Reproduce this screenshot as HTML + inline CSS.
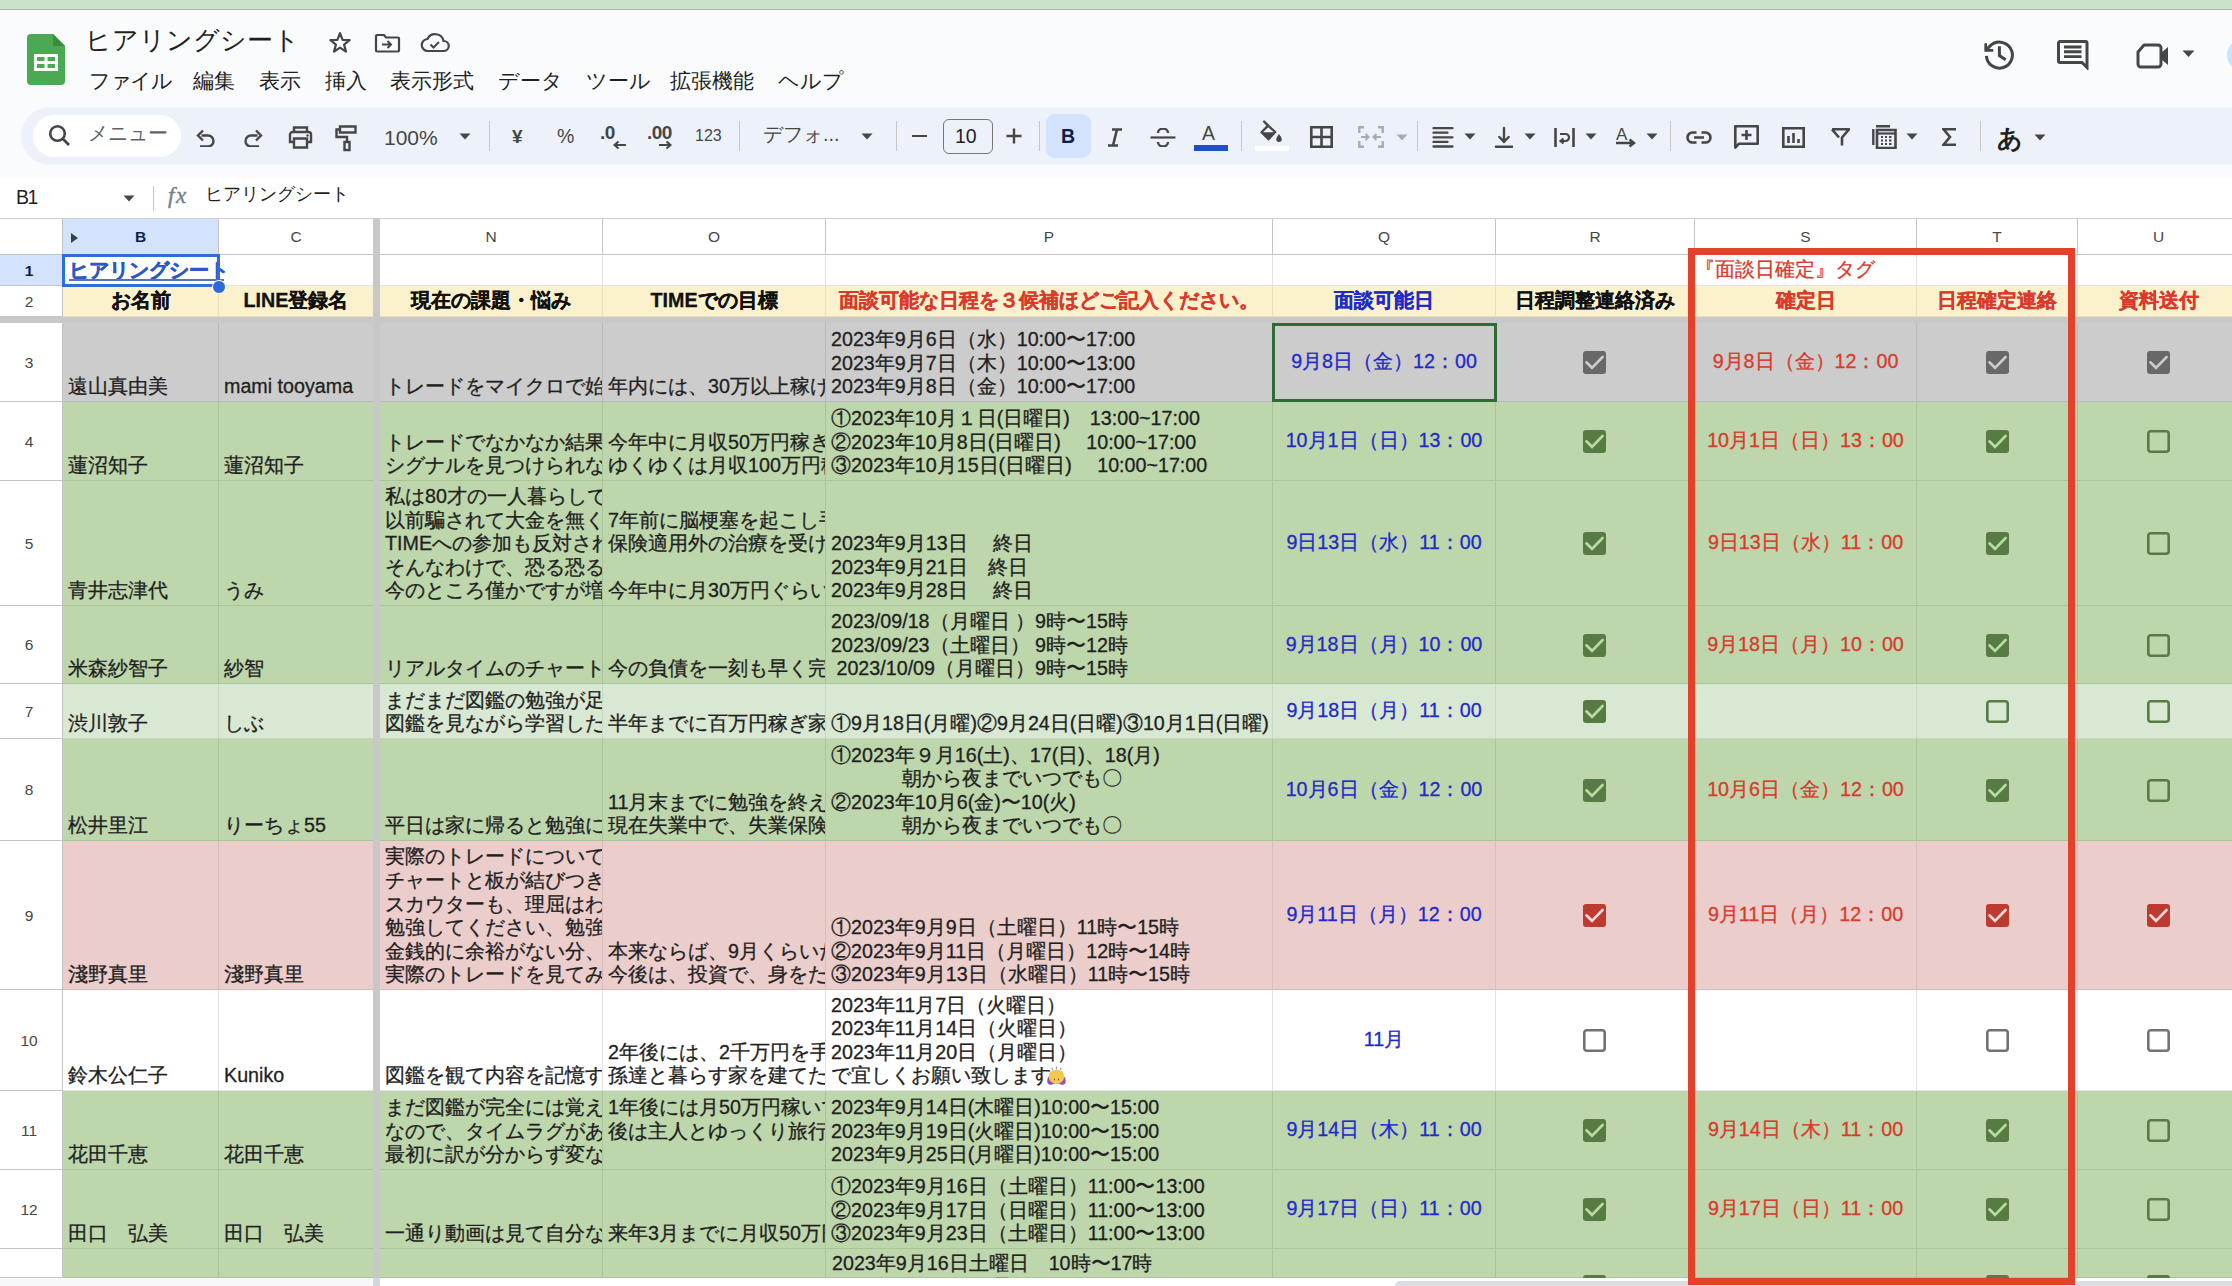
<!DOCTYPE html><html><head><meta charset="utf-8"><title>ヒアリングシート</title><style>
*{margin:0;padding:0;box-sizing:border-box}
html,body{width:2232px;height:1286px;overflow:hidden;background:#f9fbfd;
 font-family:"Liberation Sans",sans-serif;color:#1f1f1f}
div,span,svg{position:absolute}
.c{display:flex;flex-direction:column;white-space:pre;font-size:19.7px;line-height:23.6px;overflow:hidden}
.c div{position:static}
.c{-webkit-text-stroke:0.3px currentColor}
</style></head><body>
<div style="left:0px;top:0px;width:2232px;height:9px;background:#cae0c8"></div>
<div style="left:0px;top:9px;width:2232px;height:1px;background:#aabaa6"></div>
<svg style="left:27px;top:34px" width="38" height="51" viewBox="0 0 38 51"><path d="M4 0 H26 L38 12 V47 a4 4 0 0 1 -4 4 H4 a4 4 0 0 1 -4 -4 V4 a4 4 0 0 1 4 -4 Z" fill="#4ba954"/><path d="M26 0 L38 12 H26 Z" fill="#398c3e"/><path d="M7 20 H31 V37 H7 Z M10 23 V27 H17.5 V23 Z M20.5 23 V27 H28 V23 Z M10 30 V34 H17.5 V30 Z M20.5 30 V34 H28 V30 Z" fill="#fff" fill-rule="evenodd"/></svg>
<div style="left:85px;top:27px;font-size:26px;line-height:1;color:#1f1f1f;white-space:pre;">ヒアリングシート</div>
<svg style="left:328px;top:31px" width="24" height="23" viewBox="0 0 24 23"><path d="M12 2.2 L14.6 8.9 L21.6 9.2 L16.1 13.6 L18 20.6 L12 16.6 L6 20.6 L7.9 13.6 L2.4 9.2 L9.4 8.9 Z" fill="none" stroke="#444746" stroke-width="2.2" stroke-linejoin="round"/></svg>
<svg style="left:374px;top:33px" width="27" height="20" viewBox="0 0 27 20"><path d="M2 3 V17.5 a1 1 0 0 0 1 1 H24 a1 1 0 0 0 1 -1 V5.5 a1 1 0 0 0 -1 -1 H12 L10 2 H3 a1 1 0 0 0 -1 1 Z" fill="none" stroke="#444746" stroke-width="2.2"/><path d="M8 11.5 H17 M13.5 8 L17 11.5 L13.5 15" fill="none" stroke="#444746" stroke-width="2"/></svg>
<svg style="left:420px;top:32px" width="30" height="22" viewBox="0 0 30 22"><path d="M8 19 a6 6 0 0 1 -0.5 -12 a8.5 8.5 0 0 1 16 2 a5 5 0 0 1 0.5 10 Z" fill="none" stroke="#444746" stroke-width="2.2" stroke-linejoin="round"/><path d="M10.5 12.5 L13.5 15.5 L19 10" fill="none" stroke="#444746" stroke-width="2"/></svg>
<div style="left:89px;top:70px;font-size:21px;line-height:1;color:#1f1f1f;white-space:pre;letter-spacing:-1.5px">ファイル</div>
<div style="left:193px;top:70px;font-size:21px;line-height:1;color:#1f1f1f;white-space:pre;">編集</div>
<div style="left:259px;top:70px;font-size:21px;line-height:1;color:#1f1f1f;white-space:pre;">表示</div>
<div style="left:325px;top:70px;font-size:21px;line-height:1;color:#1f1f1f;white-space:pre;">挿入</div>
<div style="left:390px;top:70px;font-size:21px;line-height:1;color:#1f1f1f;white-space:pre;">表示形式</div>
<div style="left:498px;top:70px;font-size:21px;line-height:1;color:#1f1f1f;white-space:pre;">データ</div>
<div style="left:586px;top:70px;font-size:21px;line-height:1;color:#1f1f1f;white-space:pre;">ツール</div>
<div style="left:670px;top:70px;font-size:21px;line-height:1;color:#1f1f1f;white-space:pre;">拡張機能</div>
<div style="left:778px;top:70px;font-size:21px;line-height:1;color:#1f1f1f;white-space:pre;">ヘルプ</div>
<svg style="left:1982px;top:38px" width="34" height="34" viewBox="0 0 34 34"><path d="M3.7 12.4 L8 8.1 A13 13 0 1 1 4.4 17.8" fill="none" stroke="#444746" stroke-width="3"/><path d="M3.7 5.2 V12.4 H11.2" fill="none" stroke="#444746" stroke-width="2.7"/><path d="M17.4 8.2 V17.6 L23.7 21.7" fill="none" stroke="#444746" stroke-width="3"/></svg>
<svg style="left:2057px;top:39px" width="32" height="31" viewBox="0 0 32 31"><path d="M3 2.5 H28.5 a1.5 1.5 0 0 1 1.5 1.5 V28.5 L25 23.5 H3 a1.5 1.5 0 0 1 -1.5 -1.5 V4 a1.5 1.5 0 0 1 1.5 -1.5 Z" fill="none" stroke="#444746" stroke-width="3"/><path d="M7 8 H24.5 M7 12.8 H24.5 M7 17.6 H24.5" stroke="#444746" stroke-width="2.9"/></svg>
<svg style="left:2136px;top:42px" width="36" height="28" viewBox="0 0 36 28"><path d="M8 3 H22 a3 3 0 0 1 3 3 V22 a3 3 0 0 1 -3 3 H5 a3 3 0 0 1 -3 -3 V10 Z" fill="none" stroke="#444746" stroke-width="3" stroke-linejoin="round"/><path d="M25 11 L32 5 V23 L25 17 Z" fill="#444746"/></svg>
<svg style="left:2182px;top:50px" width="13" height="8" viewBox="0 0 13 8"><path d="M0.5 0.5 H12.5 L6.5 7 Z" fill="#444746"/></svg>
<div style="left:2227px;top:38px;width:36px;height:34px;border-radius:50%;background:#c2e7ff"></div>
<div style="left:21px;top:107px;width:2300px;height:58px;border-radius:29px;background:#edf2fa"></div>
<div style="left:33px;top:115px;width:148px;height:42px;border-radius:21px;background:#ffffff"></div>
<svg style="left:47px;top:123px" width="24" height="24" viewBox="0 0 24 24"><circle cx="10.5" cy="10.5" r="7.3" fill="none" stroke="#444746" stroke-width="2.6"/><path d="M15.8 15.8 L22 22" stroke="#444746" stroke-width="2.8"/></svg>
<div style="left:88px;top:123px;font-size:20px;line-height:1;color:#5f6368;white-space:pre;">メニュー</div>
<svg style="left:196px;top:128px" width="20" height="19" viewBox="0 0 20 19"><path d="M5.5 7.5 H12 a5.5 5.5 0 0 1 0 11 H4" fill="none" stroke="#444746" stroke-width="2.4"/><path d="M7 2.5 L2 7.5 L7 12.5" fill="none" stroke="#444746" stroke-width="2.4"/></svg>
<svg style="left:243px;top:128px" width="20" height="19" viewBox="0 0 20 19"><path d="M14.5 7.5 H8 a5.5 5.5 0 0 0 0 11 H16" fill="none" stroke="#444746" stroke-width="2.4"/><path d="M13 2.5 L18 7.5 L13 12.5" fill="none" stroke="#444746" stroke-width="2.4"/></svg>
<svg style="left:288px;top:126px" width="25" height="23" viewBox="0 0 25 23"><path d="M6 6 V1.5 H19 V6" fill="none" stroke="#444746" stroke-width="2.4"/><path d="M6 16 H2 V8.5 a2.5 2.5 0 0 1 2.5 -2.5 H20.5 a2.5 2.5 0 0 1 2.5 2.5 V16 H19" fill="none" stroke="#444746" stroke-width="2.4"/><path d="M6 12.5 H19 V21.5 H6 Z" fill="none" stroke="#444746" stroke-width="2.4"/><circle cx="19.5" cy="9.5" r="1.2" fill="#444746"/></svg>
<svg style="left:334px;top:125px" width="24" height="27" viewBox="0 0 24 27"><path d="M6 1.5 H21.5 V7.5 H6 Z" fill="none" stroke="#444746" stroke-width="2.4"/><path d="M6 4.5 H2.5 V12 H13 V17" fill="none" stroke="#444746" stroke-width="2.4"/><path d="M10.5 17 H15.5 V25 H10.5 Z" fill="none" stroke="#444746" stroke-width="2.4"/></svg>
<div style="left:384px;top:127px;font-size:21px;line-height:1;color:#444746;white-space:pre;">100%</div>
<svg style="left:459px;top:133px" width="12" height="7" viewBox="0 0 12 7"><path d="M0.5 0.5 H11.5 L6 6.5 Z" fill="#444746"/></svg>
<div style="left:489px;top:121px;width:1.3px;height:30px;background:#c7c7c7"></div>
<div style="left:512px;top:127px;font-size:19px;line-height:1;color:#444746;white-space:pre;font-weight:bold">¥</div>
<div style="left:557px;top:127px;font-size:19.5px;line-height:1;color:#444746;white-space:pre;">%</div>
<div style="left:600px;top:123px;font-size:19px;line-height:1;color:#444746;white-space:pre;font-weight:bold;letter-spacing:-0.5px">.0</div>
<svg style="left:612px;top:140px" width="15" height="10" viewBox="0 0 15 10"><path d="M14 5 H3 M6.5 1.5 L2.5 5 L6.5 8.5" fill="none" stroke="#444746" stroke-width="2"/></svg>
<div style="left:647px;top:123px;font-size:19px;line-height:1;color:#444746;white-space:pre;font-weight:bold;letter-spacing:-0.5px">.00</div>
<svg style="left:658px;top:140px" width="15" height="10" viewBox="0 0 15 10"><path d="M1 5 H12 M8.5 1.5 L12.5 5 L8.5 8.5" fill="none" stroke="#444746" stroke-width="2"/></svg>
<div style="left:695px;top:128px;font-size:16px;line-height:1;color:#444746;white-space:pre;">123</div>
<div style="left:739px;top:121px;width:1.3px;height:30px;background:#c7c7c7"></div>
<div style="left:763px;top:124px;font-size:20px;line-height:1;color:#444746;white-space:pre;">デフォ...</div>
<svg style="left:861px;top:133px" width="12" height="7" viewBox="0 0 12 7"><path d="M0.5 0.5 H11.5 L6 6.5 Z" fill="#444746"/></svg>
<div style="left:896px;top:121px;width:1.3px;height:30px;background:#c7c7c7"></div>
<div style="left:912px;top:135px;width:15px;height:2.4px;background:#444746"></div>
<div style="left:943px;top:118.5px;width:50px;height:35px;border:1.6px solid #747775;border-radius:6px"></div>
<div style="left:955px;top:127px;font-size:19.5px;line-height:1;color:#1f1f1f;white-space:pre;">10</div>
<svg style="left:1006px;top:128px" width="16" height="16" viewBox="0 0 16 16"><path d="M8 0.5 V15.5 M0.5 8 H15.5" stroke="#444746" stroke-width="2.4"/></svg>
<div style="left:1039px;top:121px;width:1.3px;height:30px;background:#c7c7c7"></div>
<div style="left:1046px;top:114px;width:45px;height:44px;border-radius:9px;background:#d3e3fd"></div>
<div style="left:1061px;top:127px;font-size:19.5px;line-height:1;color:#0b1f48;white-space:pre;font-weight:bold">B</div>
<svg style="left:1106px;top:128px" width="18" height="19" viewBox="0 0 18 19"><path d="M6 1.5 H16 M2 17.5 H12 M11 1.5 L7 17.5" fill="none" stroke="#444746" stroke-width="2.6"/></svg>
<svg style="left:1150px;top:128px" width="26" height="19" viewBox="0 0 26 19"><path d="M0.5 9.5 H25.5" stroke="#444746" stroke-width="2.2"/><path d="M18 5 a5 4.5 0 0 0 -10 0" fill="none" stroke="#444746" stroke-width="2.4"/><path d="M8 14 a5 4.5 0 0 0 10 0" fill="none" stroke="#444746" stroke-width="2.4"/></svg>
<div style="left:1202px;top:124px;font-size:19.5px;line-height:1;color:#444746;white-space:pre;">A</div>
<div style="left:1194px;top:145px;width:34px;height:6px;background:#1f4ec9"></div>
<div style="left:1241px;top:121px;width:1.3px;height:30px;background:#c7c7c7"></div>
<svg style="left:1258px;top:119px" width="26" height="24" viewBox="0 0 26 24"><path d="M6.1 2.5 L10 6.6" stroke="#444746" stroke-width="2.4" stroke-linecap="round"/><path d="M3.5 13.2 L10.1 6.6 L17.2 13 L10.5 20.2 Z" fill="none" stroke="#444746" stroke-width="2.3" stroke-linejoin="round"/><path d="M3.5 13.2 H17.2 L10.5 20.2 Z" fill="#444746"/><path d="M21 15 C19.3 17.5 18.3 19 18.3 20.2 a2.7 2.7 0 0 0 5.4 0 C23.7 19 22.7 17.5 21 15 Z" fill="#444746"/></svg>
<div style="left:1255px;top:146px;width:34px;height:5px;background:#ffffff;border-radius:2px"></div>
<svg style="left:1310px;top:126px" width="23" height="22" viewBox="0 0 23 22"><path d="M1.3 1.3 H21.7 V20.7 H1.3 Z M11.5 1.3 V20.7 M1.3 11 H21.7" fill="none" stroke="#444746" stroke-width="2.6"/></svg>
<svg style="left:1358px;top:126px" width="26" height="22" viewBox="0 0 26 22"><path d="M1.3 7 V1.3 H6 M20 1.3 H24.7 V7 M24.7 15 V20.7 H20 M6 20.7 H1.3 V15" fill="none" stroke="#a8abaf" stroke-width="2.4"/><path d="M3 11 H10 M7.5 8 L10.5 11 L7.5 14 M23 11 H16 M18.5 8 L15.5 11 L18.5 14" fill="none" stroke="#a8abaf" stroke-width="2"/></svg>
<svg style="left:1396px;top:134px" width="12" height="7" viewBox="0 0 12 7"><path d="M0.5 0.5 H11.5 L6 6.5 Z" fill="#a8abaf"/></svg>
<div style="left:1417px;top:121px;width:1.3px;height:30px;background:#c7c7c7"></div>
<svg style="left:1431px;top:126px" width="24" height="22" viewBox="0 0 24 22"><path d="M2.5 2.2 H21.5 M2.5 6.7 H16.5 M2.5 11.3 H21.5 M2.5 15.9 H16.5 M2.5 20.5 H21.5" stroke="#444746" stroke-width="2.3" stroke-linecap="round"/></svg>
<svg style="left:1464px;top:133px" width="12" height="7" viewBox="0 0 12 7"><path d="M0.5 0.5 H11.5 L6 6.5 Z" fill="#444746"/></svg>
<svg style="left:1494px;top:126px" width="20" height="23" viewBox="0 0 20 23"><path d="M10 2 V16 M5.3 11 L10 15.8 L14.7 11" fill="none" stroke="#444746" stroke-width="2.4" stroke-linecap="round"/><path d="M2 20.7 H18" stroke="#444746" stroke-width="2.4" stroke-linecap="round"/></svg>
<svg style="left:1524px;top:133px" width="12" height="7" viewBox="0 0 12 7"><path d="M0.5 0.5 H11.5 L6 6.5 Z" fill="#444746"/></svg>
<svg style="left:1554px;top:128px" width="21" height="19" viewBox="0 0 21 19"><path d="M1.5 0 V19 M19.5 0 V19" stroke="#444746" stroke-width="2.6"/><path d="M6 6 H11.5 a3.5 3.5 0 0 1 0 7 H7 M9.5 10.5 L6.5 13 L9.5 15.5" fill="none" stroke="#444746" stroke-width="2.2"/></svg>
<svg style="left:1585px;top:133px" width="12" height="7" viewBox="0 0 12 7"><path d="M0.5 0.5 H11.5 L6 6.5 Z" fill="#444746"/></svg>
<div style="left:1616px;top:126px;font-size:17px;line-height:1;color:#444746;white-space:pre;">A</div>
<svg style="left:1615px;top:138px" width="22" height="10" viewBox="0 0 22 10"><path d="M1 5 H18 M14.5 1.5 L19 5 L14.5 8.5" fill="none" stroke="#444746" stroke-width="2.4"/></svg>
<svg style="left:1646px;top:133px" width="12" height="7" viewBox="0 0 12 7"><path d="M0.5 0.5 H11.5 L6 6.5 Z" fill="#444746"/></svg>
<div style="left:1670px;top:121px;width:1.3px;height:30px;background:#c7c7c7"></div>
<svg style="left:1686px;top:131px" width="26" height="13" viewBox="0 0 26 13"><path d="M10.5 1.5 H6.5 a5 5 0 0 0 0 10 H10.5 M15.5 1.5 H19.5 a5 5 0 0 1 0 10 H15.5 M8 6.5 H18" fill="none" stroke="#444746" stroke-width="2.6"/></svg>
<svg style="left:1734px;top:125px" width="25" height="24" viewBox="0 0 25 24"><path d="M1.3 1.3 H23.7 V18.7 H5 L1.3 22.5 Z" fill="none" stroke="#444746" stroke-width="2.6" stroke-linejoin="round"/><path d="M12.5 5 V15 M7.5 10 H17.5" stroke="#444746" stroke-width="2.6"/></svg>
<svg style="left:1782px;top:127px" width="23" height="21" viewBox="0 0 23 21"><path d="M1.3 1.3 H21.7 V19.7 H1.3 Z" fill="none" stroke="#444746" stroke-width="2.6"/><path d="M6.5 9 V16 M11.5 6 V16 M16.5 12 V16" stroke="#444746" stroke-width="2.6"/></svg>
<svg style="left:1831px;top:128px" width="19" height="18" viewBox="0 0 19 18"><path d="M1 1.3 H18 L11 9.5 V17.5 M8 9.5 L1 1.3" fill="none" stroke="#444746" stroke-width="2.6" stroke-linejoin="round"/></svg>
<svg style="left:1872px;top:125px" width="25" height="24" viewBox="0 0 25 24"><path d="M4 1.3 H18 M1.3 4 V20" fill="none" stroke="#444746" stroke-width="2.4"/><path d="M5 5 H23.5 V23 H5 Z" fill="none" stroke="#444746" stroke-width="2.6"/><path d="M9 12 H11 M13 12 H15 M17 12 H19.5 M9 15.5 H11 M13 15.5 H15 M17 15.5 H19.5 M9 19 H11 M13 19 H15 M17 19 H19.5" stroke="#444746" stroke-width="2.2"/><path d="M5 8.5 H23.5" stroke="#444746" stroke-width="2.2"/></svg>
<svg style="left:1906px;top:133px" width="12" height="7" viewBox="0 0 12 7"><path d="M0.5 0.5 H11.5 L6 6.5 Z" fill="#444746"/></svg>
<svg style="left:1942px;top:128px" width="15" height="18" viewBox="0 0 15 18"><path d="M14 1.3 H1.5 L8 9 L1.5 16.7 H14" fill="none" stroke="#444746" stroke-width="2.6" stroke-linejoin="miter"/></svg>
<div style="left:1980px;top:121px;width:1.3px;height:30px;background:#c7c7c7"></div>
<div style="left:1997px;top:126px;font-size:25px;line-height:1;color:#1f1f1f;white-space:pre;font-weight:bold">あ</div>
<svg style="left:2034px;top:134px" width="12" height="7" viewBox="0 0 12 7"><path d="M0.5 0.5 H11.5 L6 6.5 Z" fill="#444746"/></svg>
<div style="left:0px;top:177px;width:2232px;height:1109px;background:#ffffff"></div>
<div style="left:0px;top:218px;width:2232px;height:2px;background:#cfcfcf"></div>
<div style="left:16px;top:188px;font-size:19.5px;line-height:1;color:#1f1f1f;white-space:pre;letter-spacing:-1.5px">B1</div>
<svg style="left:123px;top:195px" width="12" height="7" viewBox="0 0 12 7"><path d="M0.5 0.5 H11.5 L6 6.5 Z" fill="#444746"/></svg>
<div style="left:153px;top:186px;width:1.2px;height:25px;background:#c7c7c7"></div>
<div style="left:168px;top:184px;font-size:23px;line-height:1;color:#7a7f85;white-space:pre;font-family:Liberation Serif,serif;font-style:italic;letter-spacing:1.5px;-webkit-text-stroke:0.4px #7a7f85">fx</div>
<div style="left:205px;top:186px;font-size:17.5px;line-height:1;color:#1f1f1f;white-space:pre;">ヒアリングシート</div>
<div style="left:63px;top:255px;width:2169px;height:31px;background:#ffffff"></div>
<div style="left:63px;top:286px;width:2169px;height:31px;background:#fbf1cd"></div>
<div style="left:63px;top:323px;width:2169px;height:79px;background:#cccccc"></div>
<div style="left:63px;top:402px;width:2169px;height:79px;background:#bdd6ab"></div>
<div style="left:63px;top:481px;width:2169px;height:125px;background:#bdd6ab"></div>
<div style="left:63px;top:606px;width:2169px;height:78px;background:#bdd6ab"></div>
<div style="left:63px;top:684px;width:2169px;height:55px;background:#d9e8d2"></div>
<div style="left:63px;top:739px;width:2169px;height:102px;background:#bdd6ab"></div>
<div style="left:63px;top:841px;width:2169px;height:149px;background:#ebcdcc"></div>
<div style="left:63px;top:990px;width:2169px;height:101px;background:#ffffff"></div>
<div style="left:63px;top:1091px;width:2169px;height:79px;background:#bdd6ab"></div>
<div style="left:63px;top:1170px;width:2169px;height:79px;background:#bdd6ab"></div>
<div style="left:63px;top:1249px;width:2169px;height:29px;background:#bdd6ab"></div>
<div style="left:0px;top:219px;width:2232px;height:36px;background:#ffffff"></div>
<div style="left:63px;top:219px;width:155px;height:36px;background:#d3e3fd"></div>
<div style="left:0px;top:255px;width:62px;height:31px;background:#d3e3fd"></div>
<div style="left:0px;top:286px;width:62px;height:31px;background:#ffffff"></div>
<div style="left:0px;top:323px;width:62px;height:79px;background:#ffffff"></div>
<div style="left:0px;top:402px;width:62px;height:79px;background:#ffffff"></div>
<div style="left:0px;top:481px;width:62px;height:125px;background:#ffffff"></div>
<div style="left:0px;top:606px;width:62px;height:78px;background:#ffffff"></div>
<div style="left:0px;top:684px;width:62px;height:55px;background:#ffffff"></div>
<div style="left:0px;top:739px;width:62px;height:102px;background:#ffffff"></div>
<div style="left:0px;top:841px;width:62px;height:149px;background:#ffffff"></div>
<div style="left:0px;top:990px;width:62px;height:101px;background:#ffffff"></div>
<div style="left:0px;top:1091px;width:62px;height:79px;background:#ffffff"></div>
<div style="left:0px;top:1170px;width:62px;height:79px;background:#ffffff"></div>
<div style="left:0px;top:1249px;width:62px;height:29px;background:#ffffff"></div>
<div style="left:0px;top:254px;width:2232px;height:1px;background:#c4c4c4"></div>
<div style="left:0px;top:285px;width:62px;height:1px;background:#c4c4c4"></div>
<div style="left:63px;top:285px;width:2169px;height:1px;background:#e2e2e2"></div>
<div style="left:0px;top:316px;width:62px;height:1px;background:#c4c4c4"></div>
<div style="left:63px;top:316px;width:2169px;height:1px;background:#e9dfbd"></div>
<div style="left:0px;top:401px;width:62px;height:1px;background:#c4c4c4"></div>
<div style="left:63px;top:401px;width:2169px;height:1px;background:#bbbbbb"></div>
<div style="left:0px;top:480px;width:62px;height:1px;background:#c4c4c4"></div>
<div style="left:63px;top:480px;width:2169px;height:1px;background:#a9c498"></div>
<div style="left:0px;top:605px;width:62px;height:1px;background:#c4c4c4"></div>
<div style="left:63px;top:605px;width:2169px;height:1px;background:#a9c498"></div>
<div style="left:0px;top:683px;width:62px;height:1px;background:#c4c4c4"></div>
<div style="left:63px;top:683px;width:2169px;height:1px;background:#a9c498"></div>
<div style="left:0px;top:738px;width:62px;height:1px;background:#c4c4c4"></div>
<div style="left:63px;top:738px;width:2169px;height:1px;background:#c6d8bf"></div>
<div style="left:0px;top:840px;width:62px;height:1px;background:#c4c4c4"></div>
<div style="left:63px;top:840px;width:2169px;height:1px;background:#a9c498"></div>
<div style="left:0px;top:989px;width:62px;height:1px;background:#c4c4c4"></div>
<div style="left:63px;top:989px;width:2169px;height:1px;background:#d9bcbc"></div>
<div style="left:0px;top:1090px;width:62px;height:1px;background:#c4c4c4"></div>
<div style="left:63px;top:1090px;width:2169px;height:1px;background:#e2e2e2"></div>
<div style="left:0px;top:1169px;width:62px;height:1px;background:#c4c4c4"></div>
<div style="left:63px;top:1169px;width:2169px;height:1px;background:#a9c498"></div>
<div style="left:0px;top:1248px;width:62px;height:1px;background:#c4c4c4"></div>
<div style="left:63px;top:1248px;width:2169px;height:1px;background:#a9c498"></div>
<div style="left:0px;top:1277px;width:62px;height:1px;background:#c4c4c4"></div>
<div style="left:63px;top:1277px;width:2169px;height:1px;background:#a9c498"></div>
<div style="left:62px;top:219px;width:1px;height:36px;background:#c4c4c4"></div>
<div style="left:62px;top:255px;width:1px;height:31px;background:#c4c4c4"></div>
<div style="left:62px;top:286px;width:1px;height:31px;background:#c4c4c4"></div>
<div style="left:62px;top:323px;width:1px;height:79px;background:#c4c4c4"></div>
<div style="left:62px;top:402px;width:1px;height:79px;background:#c4c4c4"></div>
<div style="left:62px;top:481px;width:1px;height:125px;background:#c4c4c4"></div>
<div style="left:62px;top:606px;width:1px;height:78px;background:#c4c4c4"></div>
<div style="left:62px;top:684px;width:1px;height:55px;background:#c4c4c4"></div>
<div style="left:62px;top:739px;width:1px;height:102px;background:#c4c4c4"></div>
<div style="left:62px;top:841px;width:1px;height:149px;background:#c4c4c4"></div>
<div style="left:62px;top:990px;width:1px;height:101px;background:#c4c4c4"></div>
<div style="left:62px;top:1091px;width:1px;height:79px;background:#c4c4c4"></div>
<div style="left:62px;top:1170px;width:1px;height:79px;background:#c4c4c4"></div>
<div style="left:62px;top:1249px;width:1px;height:29px;background:#c4c4c4"></div>
<div style="left:218px;top:219px;width:1px;height:36px;background:#c4c4c4"></div>
<div style="left:218px;top:255px;width:1px;height:31px;background:#e2e2e2"></div>
<div style="left:218px;top:286px;width:1px;height:31px;background:#e9dfbd"></div>
<div style="left:218px;top:323px;width:1px;height:79px;background:#bbbbbb"></div>
<div style="left:218px;top:402px;width:1px;height:79px;background:#a9c498"></div>
<div style="left:218px;top:481px;width:1px;height:125px;background:#a9c498"></div>
<div style="left:218px;top:606px;width:1px;height:78px;background:#a9c498"></div>
<div style="left:218px;top:684px;width:1px;height:55px;background:#c6d8bf"></div>
<div style="left:218px;top:739px;width:1px;height:102px;background:#a9c498"></div>
<div style="left:218px;top:841px;width:1px;height:149px;background:#d9bcbc"></div>
<div style="left:218px;top:990px;width:1px;height:101px;background:#e2e2e2"></div>
<div style="left:218px;top:1091px;width:1px;height:79px;background:#a9c498"></div>
<div style="left:218px;top:1170px;width:1px;height:79px;background:#a9c498"></div>
<div style="left:218px;top:1249px;width:1px;height:29px;background:#a9c498"></div>
<div style="left:373px;top:219px;width:1px;height:36px;background:#c4c4c4"></div>
<div style="left:373px;top:255px;width:1px;height:31px;background:#e2e2e2"></div>
<div style="left:373px;top:286px;width:1px;height:31px;background:#e9dfbd"></div>
<div style="left:373px;top:323px;width:1px;height:79px;background:#bbbbbb"></div>
<div style="left:373px;top:402px;width:1px;height:79px;background:#a9c498"></div>
<div style="left:373px;top:481px;width:1px;height:125px;background:#a9c498"></div>
<div style="left:373px;top:606px;width:1px;height:78px;background:#a9c498"></div>
<div style="left:373px;top:684px;width:1px;height:55px;background:#c6d8bf"></div>
<div style="left:373px;top:739px;width:1px;height:102px;background:#a9c498"></div>
<div style="left:373px;top:841px;width:1px;height:149px;background:#d9bcbc"></div>
<div style="left:373px;top:990px;width:1px;height:101px;background:#e2e2e2"></div>
<div style="left:373px;top:1091px;width:1px;height:79px;background:#a9c498"></div>
<div style="left:373px;top:1170px;width:1px;height:79px;background:#a9c498"></div>
<div style="left:373px;top:1249px;width:1px;height:29px;background:#a9c498"></div>
<div style="left:602px;top:219px;width:1px;height:36px;background:#c4c4c4"></div>
<div style="left:602px;top:255px;width:1px;height:31px;background:#e2e2e2"></div>
<div style="left:602px;top:286px;width:1px;height:31px;background:#e9dfbd"></div>
<div style="left:602px;top:323px;width:1px;height:79px;background:#bbbbbb"></div>
<div style="left:602px;top:402px;width:1px;height:79px;background:#a9c498"></div>
<div style="left:602px;top:481px;width:1px;height:125px;background:#a9c498"></div>
<div style="left:602px;top:606px;width:1px;height:78px;background:#a9c498"></div>
<div style="left:602px;top:684px;width:1px;height:55px;background:#c6d8bf"></div>
<div style="left:602px;top:739px;width:1px;height:102px;background:#a9c498"></div>
<div style="left:602px;top:841px;width:1px;height:149px;background:#d9bcbc"></div>
<div style="left:602px;top:990px;width:1px;height:101px;background:#e2e2e2"></div>
<div style="left:602px;top:1091px;width:1px;height:79px;background:#a9c498"></div>
<div style="left:602px;top:1170px;width:1px;height:79px;background:#a9c498"></div>
<div style="left:602px;top:1249px;width:1px;height:29px;background:#a9c498"></div>
<div style="left:825px;top:219px;width:1px;height:36px;background:#c4c4c4"></div>
<div style="left:825px;top:255px;width:1px;height:31px;background:#e2e2e2"></div>
<div style="left:825px;top:286px;width:1px;height:31px;background:#e9dfbd"></div>
<div style="left:825px;top:323px;width:1px;height:79px;background:#bbbbbb"></div>
<div style="left:825px;top:402px;width:1px;height:79px;background:#a9c498"></div>
<div style="left:825px;top:481px;width:1px;height:125px;background:#a9c498"></div>
<div style="left:825px;top:606px;width:1px;height:78px;background:#a9c498"></div>
<div style="left:825px;top:684px;width:1px;height:55px;background:#c6d8bf"></div>
<div style="left:825px;top:739px;width:1px;height:102px;background:#a9c498"></div>
<div style="left:825px;top:841px;width:1px;height:149px;background:#d9bcbc"></div>
<div style="left:825px;top:990px;width:1px;height:101px;background:#e2e2e2"></div>
<div style="left:825px;top:1091px;width:1px;height:79px;background:#a9c498"></div>
<div style="left:825px;top:1170px;width:1px;height:79px;background:#a9c498"></div>
<div style="left:825px;top:1249px;width:1px;height:29px;background:#a9c498"></div>
<div style="left:1272px;top:219px;width:1px;height:36px;background:#c4c4c4"></div>
<div style="left:1272px;top:255px;width:1px;height:31px;background:#e2e2e2"></div>
<div style="left:1272px;top:286px;width:1px;height:31px;background:#e9dfbd"></div>
<div style="left:1272px;top:323px;width:1px;height:79px;background:#bbbbbb"></div>
<div style="left:1272px;top:402px;width:1px;height:79px;background:#a9c498"></div>
<div style="left:1272px;top:481px;width:1px;height:125px;background:#a9c498"></div>
<div style="left:1272px;top:606px;width:1px;height:78px;background:#a9c498"></div>
<div style="left:1272px;top:684px;width:1px;height:55px;background:#c6d8bf"></div>
<div style="left:1272px;top:739px;width:1px;height:102px;background:#a9c498"></div>
<div style="left:1272px;top:841px;width:1px;height:149px;background:#d9bcbc"></div>
<div style="left:1272px;top:990px;width:1px;height:101px;background:#e2e2e2"></div>
<div style="left:1272px;top:1091px;width:1px;height:79px;background:#a9c498"></div>
<div style="left:1272px;top:1170px;width:1px;height:79px;background:#a9c498"></div>
<div style="left:1272px;top:1249px;width:1px;height:29px;background:#a9c498"></div>
<div style="left:1495px;top:219px;width:1px;height:36px;background:#c4c4c4"></div>
<div style="left:1495px;top:255px;width:1px;height:31px;background:#e2e2e2"></div>
<div style="left:1495px;top:286px;width:1px;height:31px;background:#e9dfbd"></div>
<div style="left:1495px;top:323px;width:1px;height:79px;background:#bbbbbb"></div>
<div style="left:1495px;top:402px;width:1px;height:79px;background:#a9c498"></div>
<div style="left:1495px;top:481px;width:1px;height:125px;background:#a9c498"></div>
<div style="left:1495px;top:606px;width:1px;height:78px;background:#a9c498"></div>
<div style="left:1495px;top:684px;width:1px;height:55px;background:#c6d8bf"></div>
<div style="left:1495px;top:739px;width:1px;height:102px;background:#a9c498"></div>
<div style="left:1495px;top:841px;width:1px;height:149px;background:#d9bcbc"></div>
<div style="left:1495px;top:990px;width:1px;height:101px;background:#e2e2e2"></div>
<div style="left:1495px;top:1091px;width:1px;height:79px;background:#a9c498"></div>
<div style="left:1495px;top:1170px;width:1px;height:79px;background:#a9c498"></div>
<div style="left:1495px;top:1249px;width:1px;height:29px;background:#a9c498"></div>
<div style="left:1694px;top:219px;width:1px;height:36px;background:#c4c4c4"></div>
<div style="left:1694px;top:255px;width:1px;height:31px;background:#e2e2e2"></div>
<div style="left:1694px;top:286px;width:1px;height:31px;background:#e9dfbd"></div>
<div style="left:1694px;top:323px;width:1px;height:79px;background:#bbbbbb"></div>
<div style="left:1694px;top:402px;width:1px;height:79px;background:#a9c498"></div>
<div style="left:1694px;top:481px;width:1px;height:125px;background:#a9c498"></div>
<div style="left:1694px;top:606px;width:1px;height:78px;background:#a9c498"></div>
<div style="left:1694px;top:684px;width:1px;height:55px;background:#c6d8bf"></div>
<div style="left:1694px;top:739px;width:1px;height:102px;background:#a9c498"></div>
<div style="left:1694px;top:841px;width:1px;height:149px;background:#d9bcbc"></div>
<div style="left:1694px;top:990px;width:1px;height:101px;background:#e2e2e2"></div>
<div style="left:1694px;top:1091px;width:1px;height:79px;background:#a9c498"></div>
<div style="left:1694px;top:1170px;width:1px;height:79px;background:#a9c498"></div>
<div style="left:1694px;top:1249px;width:1px;height:29px;background:#a9c498"></div>
<div style="left:1916px;top:219px;width:1px;height:36px;background:#c4c4c4"></div>
<div style="left:1916px;top:255px;width:1px;height:31px;background:#e2e2e2"></div>
<div style="left:1916px;top:286px;width:1px;height:31px;background:#e9dfbd"></div>
<div style="left:1916px;top:323px;width:1px;height:79px;background:#bbbbbb"></div>
<div style="left:1916px;top:402px;width:1px;height:79px;background:#a9c498"></div>
<div style="left:1916px;top:481px;width:1px;height:125px;background:#a9c498"></div>
<div style="left:1916px;top:606px;width:1px;height:78px;background:#a9c498"></div>
<div style="left:1916px;top:684px;width:1px;height:55px;background:#c6d8bf"></div>
<div style="left:1916px;top:739px;width:1px;height:102px;background:#a9c498"></div>
<div style="left:1916px;top:841px;width:1px;height:149px;background:#d9bcbc"></div>
<div style="left:1916px;top:990px;width:1px;height:101px;background:#e2e2e2"></div>
<div style="left:1916px;top:1091px;width:1px;height:79px;background:#a9c498"></div>
<div style="left:1916px;top:1170px;width:1px;height:79px;background:#a9c498"></div>
<div style="left:1916px;top:1249px;width:1px;height:29px;background:#a9c498"></div>
<div style="left:2077px;top:219px;width:1px;height:36px;background:#c4c4c4"></div>
<div style="left:2077px;top:255px;width:1px;height:31px;background:#e2e2e2"></div>
<div style="left:2077px;top:286px;width:1px;height:31px;background:#e9dfbd"></div>
<div style="left:2077px;top:323px;width:1px;height:79px;background:#bbbbbb"></div>
<div style="left:2077px;top:402px;width:1px;height:79px;background:#a9c498"></div>
<div style="left:2077px;top:481px;width:1px;height:125px;background:#a9c498"></div>
<div style="left:2077px;top:606px;width:1px;height:78px;background:#a9c498"></div>
<div style="left:2077px;top:684px;width:1px;height:55px;background:#c6d8bf"></div>
<div style="left:2077px;top:739px;width:1px;height:102px;background:#a9c498"></div>
<div style="left:2077px;top:841px;width:1px;height:149px;background:#d9bcbc"></div>
<div style="left:2077px;top:990px;width:1px;height:101px;background:#e2e2e2"></div>
<div style="left:2077px;top:1091px;width:1px;height:79px;background:#a9c498"></div>
<div style="left:2077px;top:1170px;width:1px;height:79px;background:#a9c498"></div>
<div style="left:2077px;top:1249px;width:1px;height:29px;background:#a9c498"></div>
<div style="left:373px;top:219px;width:7px;height:1067px;background:#c8c8c8"></div>
<div style="left:0px;top:317px;width:2232px;height:6px;background:#c8c8c8"></div>
<div class="c" style="left:63px;top:286px;width:155px;height:30px;justify-content:center;text-align:center;color:#111;font-weight:bold;padding:0 5px 0px 5px;"><div>お名前</div></div>
<div class="c" style="left:219px;top:286px;width:154px;height:30px;justify-content:center;text-align:center;color:#111;font-weight:bold;padding:0 5px 0px 5px;"><div>LINE登録名</div></div>
<div class="c" style="left:380px;top:286px;width:222px;height:30px;justify-content:center;text-align:center;color:#111;font-weight:bold;padding:0 5px 0px 5px;"><div>現在の課題・悩み</div></div>
<div class="c" style="left:603px;top:286px;width:222px;height:30px;justify-content:center;text-align:center;color:#111;font-weight:bold;padding:0 5px 0px 5px;"><div>TIMEでの目標</div></div>
<div class="c" style="left:826px;top:286px;width:446px;height:30px;justify-content:center;text-align:center;color:#d93a2b;font-weight:bold;padding:0 5px 0px 5px;"><div>面談可能な日程を３候補ほどご記入ください。</div></div>
<div class="c" style="left:1273px;top:286px;width:222px;height:30px;justify-content:center;text-align:center;color:#1f2acb;font-weight:bold;padding:0 5px 0px 5px;"><div>面談可能日</div></div>
<div class="c" style="left:1496px;top:286px;width:198px;height:30px;justify-content:center;text-align:center;color:#111;font-weight:bold;padding:0 5px 0px 5px;"><div>日程調整連絡済み</div></div>
<div class="c" style="left:1695px;top:286px;width:221px;height:30px;justify-content:center;text-align:center;color:#d93a2b;font-weight:bold;padding:0 5px 0px 5px;"><div>確定日</div></div>
<div class="c" style="left:1917px;top:286px;width:160px;height:30px;justify-content:center;text-align:center;color:#d93a2b;font-weight:bold;padding:0 5px 0px 5px;"><div>日程確定連絡</div></div>
<div class="c" style="left:2078px;top:286px;width:161px;height:30px;justify-content:center;text-align:center;color:#d93a2b;font-weight:bold;padding:0 5px 0px 5px;"><div>資料送付</div></div>
<div class="c" style="left:1695px;top:255px;width:221px;height:30px;justify-content:center;text-align:left;color:#d93a2b;padding:0 5px 0px 0px;"><div>『面談日確定』タグ</div></div>
<div class="c" style="left:63px;top:323px;width:155px;height:78px;justify-content:flex-end;text-align:left;color:#1f1f1f;padding:0 5px 2px 5px;"><div>遠山真由美</div></div>
<div class="c" style="left:219px;top:323px;width:154px;height:78px;justify-content:flex-end;text-align:left;color:#1f1f1f;padding:0 5px 2px 5px;"><div>mami tooyama</div></div>
<div class="c" style="left:380px;top:323px;width:222px;height:78px;justify-content:flex-end;text-align:left;color:#1f1f1f;padding:0 5px 2px 5px;"><div>トレードをマイクロで始めたい</div></div>
<div class="c" style="left:603px;top:323px;width:222px;height:78px;justify-content:flex-end;text-align:left;color:#1f1f1f;padding:0 5px 2px 5px;"><div>年内には、30万以上稼げるようになりたい</div></div>
<div class="c" style="left:826px;top:323px;width:446px;height:78px;justify-content:flex-end;text-align:left;color:#1f1f1f;padding:0 5px 2px 5px;"><div>2023年9月6日（水）10:00〜17:00</div><div>2023年9月7日（木）10:00〜13:00</div><div>2023年9月8日（金）10:00〜17:00</div></div>
<div class="c" style="left:1273px;top:323px;width:222px;height:78px;justify-content:center;text-align:center;color:#1f2acb;padding:0 5px 0px 5px;"><div>9月8日（金）12：00</div></div>
<div class="c" style="left:1695px;top:323px;width:221px;height:78px;justify-content:center;text-align:center;color:#d93a2b;padding:0 5px 0px 5px;"><div>9月8日（金）12：00</div></div>
<div class="c" style="left:63px;top:402px;width:155px;height:78px;justify-content:flex-end;text-align:left;color:#1f1f1f;padding:0 5px 2px 5px;"><div>蓮沼知子</div></div>
<div class="c" style="left:219px;top:402px;width:154px;height:78px;justify-content:flex-end;text-align:left;color:#1f1f1f;padding:0 5px 2px 5px;"><div>蓮沼知子</div></div>
<div class="c" style="left:380px;top:402px;width:222px;height:78px;justify-content:flex-end;text-align:left;color:#1f1f1f;padding:0 5px 2px 5px;"><div>トレードでなかなか結果が</div><div>シグナルを見つけられない</div></div>
<div class="c" style="left:603px;top:402px;width:222px;height:78px;justify-content:flex-end;text-align:left;color:#1f1f1f;padding:0 5px 2px 5px;"><div>今年中に月収50万円稼ぎたい</div><div>ゆくゆくは月収100万円稼ぎたい</div></div>
<div class="c" style="left:826px;top:402px;width:446px;height:78px;justify-content:flex-end;text-align:left;color:#1f1f1f;padding:0 5px 2px 5px;"><div>①2023年10月１日(日曜日)　13:00~17:00</div><div>②2023年10月8日(日曜日)　 10:00~17:00</div><div>③2023年10月15日(日曜日)　 10:00~17:00</div></div>
<div class="c" style="left:1273px;top:402px;width:222px;height:78px;justify-content:center;text-align:center;color:#1f2acb;padding:0 5px 0px 5px;"><div>10月1日（日）13：00</div></div>
<div class="c" style="left:1695px;top:402px;width:221px;height:78px;justify-content:center;text-align:center;color:#d93a2b;padding:0 5px 0px 5px;"><div>10月1日（日）13：00</div></div>
<div class="c" style="left:63px;top:481px;width:155px;height:124px;justify-content:flex-end;text-align:left;color:#1f1f1f;padding:0 5px 2px 5px;"><div>青井志津代</div></div>
<div class="c" style="left:219px;top:481px;width:154px;height:124px;justify-content:flex-end;text-align:left;color:#1f1f1f;padding:0 5px 2px 5px;"><div>うみ</div></div>
<div class="c" style="left:380px;top:481px;width:222px;height:124px;justify-content:flex-end;text-align:left;color:#1f1f1f;padding:0 5px 2px 5px;"><div>私は80才の一人暮らしで</div><div>以前騙されて大金を無くし</div><div>TIMEへの参加も反対され</div><div>そんなわけで、恐る恐る</div><div>今のところ僅かですが増えて</div></div>
<div class="c" style="left:603px;top:481px;width:222px;height:124px;justify-content:flex-end;text-align:left;color:#1f1f1f;padding:0 5px 2px 5px;"><div>7年前に脳梗塞を起こし手</div><div>保険適用外の治療を受けて</div><div>&nbsp;</div><div>今年中に月30万円ぐらい</div></div>
<div class="c" style="left:826px;top:481px;width:446px;height:124px;justify-content:flex-end;text-align:left;color:#1f1f1f;padding:0 5px 2px 5px;"><div>2023年9月13日　 終日</div><div>2023年9月21日　終日</div><div>2023年9月28日　 終日</div></div>
<div class="c" style="left:1273px;top:481px;width:222px;height:124px;justify-content:center;text-align:center;color:#1f2acb;padding:0 5px 0px 5px;"><div>9日13日（水）11：00</div></div>
<div class="c" style="left:1695px;top:481px;width:221px;height:124px;justify-content:center;text-align:center;color:#d93a2b;padding:0 5px 0px 5px;"><div>9日13日（水）11：00</div></div>
<div class="c" style="left:63px;top:606px;width:155px;height:77px;justify-content:flex-end;text-align:left;color:#1f1f1f;padding:0 5px 2px 5px;"><div>米森紗智子</div></div>
<div class="c" style="left:219px;top:606px;width:154px;height:77px;justify-content:flex-end;text-align:left;color:#1f1f1f;padding:0 5px 2px 5px;"><div>紗智</div></div>
<div class="c" style="left:380px;top:606px;width:222px;height:77px;justify-content:flex-end;text-align:left;color:#1f1f1f;padding:0 5px 2px 5px;"><div>リアルタイムのチャートを</div></div>
<div class="c" style="left:603px;top:606px;width:222px;height:77px;justify-content:flex-end;text-align:left;color:#1f1f1f;padding:0 5px 2px 5px;"><div>今の負債を一刻も早く完済</div></div>
<div class="c" style="left:826px;top:606px;width:446px;height:77px;justify-content:flex-end;text-align:left;color:#1f1f1f;padding:0 5px 2px 5px;"><div>2023/09/18（月曜日 ）9時〜15時</div><div>2023/09/23（土曜日） 9時〜12時</div><div> 2023/10/09（月曜日）9時〜15時</div></div>
<div class="c" style="left:1273px;top:606px;width:222px;height:77px;justify-content:center;text-align:center;color:#1f2acb;padding:0 5px 0px 5px;"><div>9月18日（月）10：00</div></div>
<div class="c" style="left:1695px;top:606px;width:221px;height:77px;justify-content:center;text-align:center;color:#d93a2b;padding:0 5px 0px 5px;"><div>9月18日（月）10：00</div></div>
<div class="c" style="left:63px;top:684px;width:155px;height:54px;justify-content:flex-end;text-align:left;color:#1f1f1f;padding:0 5px 2px 5px;"><div>渋川敦子</div></div>
<div class="c" style="left:219px;top:684px;width:154px;height:54px;justify-content:flex-end;text-align:left;color:#1f1f1f;padding:0 5px 2px 5px;"><div>しぶ</div></div>
<div class="c" style="left:380px;top:684px;width:222px;height:54px;justify-content:flex-end;text-align:left;color:#1f1f1f;padding:0 5px 2px 5px;"><div>まだまだ図鑑の勉強が足り</div><div>図鑑を見ながら学習したい</div></div>
<div class="c" style="left:603px;top:684px;width:222px;height:54px;justify-content:flex-end;text-align:left;color:#1f1f1f;padding:0 5px 2px 5px;"><div>半年までに百万円稼ぎ家族</div></div>
<div class="c" style="left:826px;top:684px;width:446px;height:54px;justify-content:flex-end;text-align:left;color:#1f1f1f;padding:0 5px 2px 5px;"><div>①9月18日(月曜)②9月24日(日曜)③10月1日(日曜)</div></div>
<div class="c" style="left:1273px;top:684px;width:222px;height:54px;justify-content:center;text-align:center;color:#1f2acb;padding:0 5px 0px 5px;"><div>9月18日（月）11：00</div></div>
<div class="c" style="left:63px;top:739px;width:155px;height:101px;justify-content:flex-end;text-align:left;color:#1f1f1f;padding:0 5px 2px 5px;"><div>松井里江</div></div>
<div class="c" style="left:219px;top:739px;width:154px;height:101px;justify-content:flex-end;text-align:left;color:#1f1f1f;padding:0 5px 2px 5px;"><div>りーちょ55</div></div>
<div class="c" style="left:380px;top:739px;width:222px;height:101px;justify-content:flex-end;text-align:left;color:#1f1f1f;padding:0 5px 2px 5px;"><div>平日は家に帰ると勉強に</div></div>
<div class="c" style="left:603px;top:739px;width:222px;height:101px;justify-content:flex-end;text-align:left;color:#1f1f1f;padding:0 5px 2px 5px;"><div>11月末までに勉強を終え</div><div>現在失業中で、失業保険</div></div>
<div class="c" style="left:826px;top:739px;width:446px;height:101px;justify-content:flex-end;text-align:left;color:#1f1f1f;padding:0 5px 2px 5px;"><div>①2023年９月16(土)、17(日)、18(月)</div><div>　　　  朝から夜までいつでも〇</div><div>②2023年10月6(金)〜10(火)</div><div>　　　  朝から夜までいつでも〇</div></div>
<div class="c" style="left:1273px;top:739px;width:222px;height:101px;justify-content:center;text-align:center;color:#1f2acb;padding:0 5px 0px 5px;"><div>10月6日（金）12：00</div></div>
<div class="c" style="left:1695px;top:739px;width:221px;height:101px;justify-content:center;text-align:center;color:#d93a2b;padding:0 5px 0px 5px;"><div>10月6日（金）12：00</div></div>
<div class="c" style="left:63px;top:841px;width:155px;height:148px;justify-content:flex-end;text-align:left;color:#1f1f1f;padding:0 5px 2px 5px;"><div>淺野真里</div></div>
<div class="c" style="left:219px;top:841px;width:154px;height:148px;justify-content:flex-end;text-align:left;color:#1f1f1f;padding:0 5px 2px 5px;"><div>淺野真里</div></div>
<div class="c" style="left:380px;top:841px;width:222px;height:148px;justify-content:flex-end;text-align:left;color:#1f1f1f;padding:0 5px 2px 5px;"><div>実際のトレードについて、</div><div>チャートと板が結びつき</div><div>スカウターも、理屈はわか</div><div>勉強してください、勉強</div><div>金銭的に余裕がない分、</div><div>実際のトレードを見てみ</div></div>
<div class="c" style="left:603px;top:841px;width:222px;height:148px;justify-content:flex-end;text-align:left;color:#1f1f1f;padding:0 5px 2px 5px;"><div>本来ならば、9月くらいだ</div><div>今後は、投資で、身をたて</div></div>
<div class="c" style="left:826px;top:841px;width:446px;height:148px;justify-content:flex-end;text-align:left;color:#1f1f1f;padding:0 5px 2px 5px;"><div>①2023年9月9日（土曜日）11時〜15時</div><div>②2023年9月11日（月曜日）12時〜14時</div><div>③2023年9月13日（水曜日）11時〜15時</div></div>
<div class="c" style="left:1273px;top:841px;width:222px;height:148px;justify-content:center;text-align:center;color:#1f2acb;padding:0 5px 0px 5px;"><div>9月11日（月）12：00</div></div>
<div class="c" style="left:1695px;top:841px;width:221px;height:148px;justify-content:center;text-align:center;color:#d93a2b;padding:0 5px 0px 5px;"><div>9月11日（月）12：00</div></div>
<div class="c" style="left:63px;top:990px;width:155px;height:100px;justify-content:flex-end;text-align:left;color:#1f1f1f;padding:0 5px 2px 5px;"><div>鈴木公仁子</div></div>
<div class="c" style="left:219px;top:990px;width:154px;height:100px;justify-content:flex-end;text-align:left;color:#1f1f1f;padding:0 5px 2px 5px;"><div>Kuniko</div></div>
<div class="c" style="left:380px;top:990px;width:222px;height:100px;justify-content:flex-end;text-align:left;color:#1f1f1f;padding:0 5px 2px 5px;"><div>図鑑を観て内容を記憶す</div></div>
<div class="c" style="left:603px;top:990px;width:222px;height:100px;justify-content:flex-end;text-align:left;color:#1f1f1f;padding:0 5px 2px 5px;"><div>2年後には、2千万円を手に</div><div>孫達と暮らす家を建てたい</div></div>
<div class="c" style="left:826px;top:990px;width:446px;height:100px;justify-content:flex-end;text-align:left;color:#1f1f1f;padding:0 5px 2px 5px;"><div>2023年11月7日（火曜日）</div><div>2023年11月14日（火曜日）</div><div>2023年11月20日（月曜日）</div><div>で宜しくお願い致します</div></div>
<div class="c" style="left:1273px;top:990px;width:222px;height:100px;justify-content:center;text-align:center;color:#1f2acb;padding:0 5px 0px 5px;"><div>11月</div></div>
<div class="c" style="left:63px;top:1091px;width:155px;height:78px;justify-content:flex-end;text-align:left;color:#1f1f1f;padding:0 5px 2px 5px;"><div>花田千恵</div></div>
<div class="c" style="left:219px;top:1091px;width:154px;height:78px;justify-content:flex-end;text-align:left;color:#1f1f1f;padding:0 5px 2px 5px;"><div>花田千恵</div></div>
<div class="c" style="left:380px;top:1091px;width:222px;height:78px;justify-content:flex-end;text-align:left;color:#1f1f1f;padding:0 5px 2px 5px;"><div>まだ図鑑が完全には覚え</div><div>なので、タイムラグがあ</div><div>最初に訳が分からず変な</div></div>
<div class="c" style="left:603px;top:1091px;width:222px;height:78px;justify-content:flex-end;text-align:left;color:#1f1f1f;padding:0 5px 2px 5px;"><div>1年後には月50万円稼いで</div><div>後は主人とゆっくり旅行</div><div>&nbsp;</div></div>
<div class="c" style="left:826px;top:1091px;width:446px;height:78px;justify-content:flex-end;text-align:left;color:#1f1f1f;padding:0 5px 2px 5px;"><div>2023年9月14日(木曜日)10:00〜15:00</div><div>2023年9月19日(火曜日)10:00〜15:00</div><div>2023年9月25日(月曜日)10:00〜15:00</div></div>
<div class="c" style="left:1273px;top:1091px;width:222px;height:78px;justify-content:center;text-align:center;color:#1f2acb;padding:0 5px 0px 5px;"><div>9月14日（木）11：00</div></div>
<div class="c" style="left:1695px;top:1091px;width:221px;height:78px;justify-content:center;text-align:center;color:#d93a2b;padding:0 5px 0px 5px;"><div>9月14日（木）11：00</div></div>
<div class="c" style="left:63px;top:1170px;width:155px;height:78px;justify-content:flex-end;text-align:left;color:#1f1f1f;padding:0 5px 2px 5px;"><div>田口　弘美</div></div>
<div class="c" style="left:219px;top:1170px;width:154px;height:78px;justify-content:flex-end;text-align:left;color:#1f1f1f;padding:0 5px 2px 5px;"><div>田口　弘美</div></div>
<div class="c" style="left:380px;top:1170px;width:222px;height:78px;justify-content:flex-end;text-align:left;color:#1f1f1f;padding:0 5px 2px 5px;"><div>一通り動画は見て自分な</div></div>
<div class="c" style="left:603px;top:1170px;width:222px;height:78px;justify-content:flex-end;text-align:left;color:#1f1f1f;padding:0 5px 2px 5px;"><div>来年3月までに月収50万円</div></div>
<div class="c" style="left:826px;top:1170px;width:446px;height:78px;justify-content:flex-end;text-align:left;color:#1f1f1f;padding:0 5px 2px 5px;"><div>①2023年9月16日（土曜日）11:00〜13:00</div><div>②2023年9月17日（日曜日）11:00〜13:00</div><div>③2023年9月23日（土曜日）11:00〜13:00</div></div>
<div class="c" style="left:1273px;top:1170px;width:222px;height:78px;justify-content:center;text-align:center;color:#1f2acb;padding:0 5px 0px 5px;"><div>9月17日（日）11：00</div></div>
<div class="c" style="left:1695px;top:1170px;width:221px;height:78px;justify-content:center;text-align:center;color:#d93a2b;padding:0 5px 0px 5px;"><div>9月17日（日）11：00</div></div>
<div class="c" style="left:826px;top:1249px;width:446px;height:29px;justify-content:flex-start;padding:3px 5px 0 6px"><div>2023年9月16日土曜日　10時〜17時</div><div>2023年9月17日日曜日</div></div>
<div style="left:63px;top:219px;width:155px;height:36px;line-height:35px;text-align:center;font-size:15.5px;font-weight:bold;color:#0b1f48;">B</div>
<div style="left:219px;top:219px;width:154px;height:36px;line-height:35px;text-align:center;font-size:15.5px;color:#444746;">C</div>
<div style="left:380px;top:219px;width:222px;height:36px;line-height:35px;text-align:center;font-size:15.5px;color:#444746;">N</div>
<div style="left:603px;top:219px;width:222px;height:36px;line-height:35px;text-align:center;font-size:15.5px;color:#444746;">O</div>
<div style="left:826px;top:219px;width:446px;height:36px;line-height:35px;text-align:center;font-size:15.5px;color:#444746;">P</div>
<div style="left:1273px;top:219px;width:222px;height:36px;line-height:35px;text-align:center;font-size:15.5px;color:#444746;">Q</div>
<div style="left:1496px;top:219px;width:198px;height:36px;line-height:35px;text-align:center;font-size:15.5px;color:#444746;">R</div>
<div style="left:1695px;top:219px;width:221px;height:36px;line-height:35px;text-align:center;font-size:15.5px;color:#444746;">S</div>
<div style="left:1917px;top:219px;width:160px;height:36px;line-height:35px;text-align:center;font-size:15.5px;color:#444746;">T</div>
<div style="left:2078px;top:219px;width:161px;height:36px;line-height:35px;text-align:center;font-size:15.5px;color:#444746;">U</div>
<svg style="left:70px;top:232px" width="9" height="12" viewBox="0 0 9 12"><path d="M1 1 L8 6 L1 11 Z" fill="#3c4043"/></svg>
<div style="left:0;top:255px;width:58px;height:31px;line-height:31px;text-align:center;font-size:15.5px;font-weight:bold;color:#0b1f48;">1</div>
<div style="left:0;top:286px;width:58px;height:31px;line-height:31px;text-align:center;font-size:15.5px;color:#444746;">2</div>
<div style="left:0;top:323px;width:58px;height:79px;line-height:79px;text-align:center;font-size:15.5px;color:#444746;">3</div>
<div style="left:0;top:402px;width:58px;height:79px;line-height:79px;text-align:center;font-size:15.5px;color:#444746;">4</div>
<div style="left:0;top:481px;width:58px;height:125px;line-height:125px;text-align:center;font-size:15.5px;color:#444746;">5</div>
<div style="left:0;top:606px;width:58px;height:78px;line-height:78px;text-align:center;font-size:15.5px;color:#444746;">6</div>
<div style="left:0;top:684px;width:58px;height:55px;line-height:55px;text-align:center;font-size:15.5px;color:#444746;">7</div>
<div style="left:0;top:739px;width:58px;height:102px;line-height:102px;text-align:center;font-size:15.5px;color:#444746;">8</div>
<div style="left:0;top:841px;width:58px;height:149px;line-height:149px;text-align:center;font-size:15.5px;color:#444746;">9</div>
<div style="left:0;top:990px;width:58px;height:101px;line-height:101px;text-align:center;font-size:15.5px;color:#444746;">10</div>
<div style="left:0;top:1091px;width:58px;height:79px;line-height:79px;text-align:center;font-size:15.5px;color:#444746;">11</div>
<div style="left:0;top:1170px;width:58px;height:79px;line-height:79px;text-align:center;font-size:15.5px;color:#444746;">12</div>
<div style="left:69px;top:256px;width:180px;height:28px;line-height:28px;font-size:19.7px;font-weight:bold;color:#2a58c8;white-space:pre;-webkit-text-stroke:0.5px #2a58c8">ヒアリングシート</div>
<div style="left:69px;top:279px;width:155px;height:2px;background:#5a72b8"></div>
<div style="left:62px;top:254px;width:158px;height:32.5px;border:3px solid #2d6fd8"></div>
<div style="left:212px;top:280px;width:14px;height:14px;border-radius:50%;background:#2d6ad6;border:1.5px solid #fff"></div>
<div style="left:1272px;top:323px;width:225px;height:79px;border:3px solid #2f6a37"></div>
<svg style="left:1046px;top:1064px" width="21" height="22" viewBox="0 0 21 22"><path d="M6 3.5 L6.5 6 M10.5 2.5 V5.5 M15 3.5 L14.5 6" stroke="#9aa0b8" stroke-width="1.2"/><path d="M1.5 19 C0.5 14 3 11 6 12 L10.5 18 L15 12 C18 11 20.5 14 19.5 19 C18 21.5 15 21 13 19.5 H8 C6 21 3 21.5 1.5 19 Z" fill="#9a4db8"/><path d="M3 13 C3 7 6 6 10.5 6 C15 6 18 7 18 13 C18 17 15 19.5 10.5 19.5 C6 19.5 3 17 3 13 Z" fill="#f2c94c"/><path d="M8 15.5 H9 M12 15.5 H13" stroke="#6b4a1a" stroke-width="1.3"/></svg>
<div style="left:0px;top:1278px;width:2232px;height:8px;background:#ffffff"></div>
<div style="left:0px;top:1279px;width:373px;height:7px;background:#f7f7f9"></div>
<div style="left:373px;top:1278px;width:7px;height:8px;background:#d3d6dc"></div>
<div style="left:1395px;top:1281px;width:900px;height:10px;border-radius:5px;background:#dcdde2"></div>
<svg style="left:1583.2px;top:351.0px" width="23" height="23" viewBox="0 0 23 23"><rect x="0" y="0" width="23" height="23" rx="3" fill="#686868"/><path d="M3.4 11.3 L9 16.8 L19.6 6" stroke="#cccccc" stroke-width="2.6" fill="none" stroke-linecap="round" stroke-linejoin="miter"/></svg>
<svg style="left:1985.5px;top:351.0px" width="23" height="23" viewBox="0 0 23 23"><rect x="0" y="0" width="23" height="23" rx="3" fill="#686868"/><path d="M3.4 11.3 L9 16.8 L19.6 6" stroke="#cccccc" stroke-width="2.6" fill="none" stroke-linecap="round" stroke-linejoin="miter"/></svg>
<svg style="left:2146.9px;top:351.0px" width="23" height="23" viewBox="0 0 23 23"><rect x="0" y="0" width="23" height="23" rx="3" fill="#686868"/><path d="M3.4 11.3 L9 16.8 L19.6 6" stroke="#cccccc" stroke-width="2.6" fill="none" stroke-linecap="round" stroke-linejoin="miter"/></svg>
<svg style="left:1583.2px;top:430.0px" width="23" height="23" viewBox="0 0 23 23"><rect x="0" y="0" width="23" height="23" rx="3" fill="#587b45"/><path d="M3.4 11.3 L9 16.8 L19.6 6" stroke="#b9dca0" stroke-width="2.6" fill="none" stroke-linecap="round" stroke-linejoin="miter"/></svg>
<svg style="left:1985.5px;top:430.0px" width="23" height="23" viewBox="0 0 23 23"><rect x="0" y="0" width="23" height="23" rx="3" fill="#587b45"/><path d="M3.4 11.3 L9 16.8 L19.6 6" stroke="#b9dca0" stroke-width="2.6" fill="none" stroke-linecap="round" stroke-linejoin="miter"/></svg>
<svg style="left:2146.9px;top:430.0px" width="23" height="23" viewBox="0 0 23 23"><rect x="1.3" y="1.3" width="20.4" height="20.4" rx="2.5" fill="none" stroke="#587a44" stroke-width="2.6"/></svg>
<svg style="left:1583.2px;top:532.0px" width="23" height="23" viewBox="0 0 23 23"><rect x="0" y="0" width="23" height="23" rx="3" fill="#587b45"/><path d="M3.4 11.3 L9 16.8 L19.6 6" stroke="#b9dca0" stroke-width="2.6" fill="none" stroke-linecap="round" stroke-linejoin="miter"/></svg>
<svg style="left:1985.5px;top:532.0px" width="23" height="23" viewBox="0 0 23 23"><rect x="0" y="0" width="23" height="23" rx="3" fill="#587b45"/><path d="M3.4 11.3 L9 16.8 L19.6 6" stroke="#b9dca0" stroke-width="2.6" fill="none" stroke-linecap="round" stroke-linejoin="miter"/></svg>
<svg style="left:2146.9px;top:532.0px" width="23" height="23" viewBox="0 0 23 23"><rect x="1.3" y="1.3" width="20.4" height="20.4" rx="2.5" fill="none" stroke="#587a44" stroke-width="2.6"/></svg>
<svg style="left:1583.2px;top:633.5px" width="23" height="23" viewBox="0 0 23 23"><rect x="0" y="0" width="23" height="23" rx="3" fill="#587b45"/><path d="M3.4 11.3 L9 16.8 L19.6 6" stroke="#b9dca0" stroke-width="2.6" fill="none" stroke-linecap="round" stroke-linejoin="miter"/></svg>
<svg style="left:1985.5px;top:633.5px" width="23" height="23" viewBox="0 0 23 23"><rect x="0" y="0" width="23" height="23" rx="3" fill="#587b45"/><path d="M3.4 11.3 L9 16.8 L19.6 6" stroke="#b9dca0" stroke-width="2.6" fill="none" stroke-linecap="round" stroke-linejoin="miter"/></svg>
<svg style="left:2146.9px;top:633.5px" width="23" height="23" viewBox="0 0 23 23"><rect x="1.3" y="1.3" width="20.4" height="20.4" rx="2.5" fill="none" stroke="#587a44" stroke-width="2.6"/></svg>
<svg style="left:1583.2px;top:700.0px" width="23" height="23" viewBox="0 0 23 23"><rect x="0" y="0" width="23" height="23" rx="3" fill="#587b45"/><path d="M3.4 11.3 L9 16.8 L19.6 6" stroke="#b9dca0" stroke-width="2.6" fill="none" stroke-linecap="round" stroke-linejoin="miter"/></svg>
<svg style="left:1985.5px;top:700.0px" width="23" height="23" viewBox="0 0 23 23"><rect x="1.3" y="1.3" width="20.4" height="20.4" rx="2.5" fill="none" stroke="#587a44" stroke-width="2.6"/></svg>
<svg style="left:2146.9px;top:700.0px" width="23" height="23" viewBox="0 0 23 23"><rect x="1.3" y="1.3" width="20.4" height="20.4" rx="2.5" fill="none" stroke="#587a44" stroke-width="2.6"/></svg>
<svg style="left:1583.2px;top:778.5px" width="23" height="23" viewBox="0 0 23 23"><rect x="0" y="0" width="23" height="23" rx="3" fill="#587b45"/><path d="M3.4 11.3 L9 16.8 L19.6 6" stroke="#b9dca0" stroke-width="2.6" fill="none" stroke-linecap="round" stroke-linejoin="miter"/></svg>
<svg style="left:1985.5px;top:778.5px" width="23" height="23" viewBox="0 0 23 23"><rect x="0" y="0" width="23" height="23" rx="3" fill="#587b45"/><path d="M3.4 11.3 L9 16.8 L19.6 6" stroke="#b9dca0" stroke-width="2.6" fill="none" stroke-linecap="round" stroke-linejoin="miter"/></svg>
<svg style="left:2146.9px;top:778.5px" width="23" height="23" viewBox="0 0 23 23"><rect x="1.3" y="1.3" width="20.4" height="20.4" rx="2.5" fill="none" stroke="#587a44" stroke-width="2.6"/></svg>
<svg style="left:1583.2px;top:904.0px" width="23" height="23" viewBox="0 0 23 23"><rect x="0" y="0" width="23" height="23" rx="3" fill="#bd3a30"/><path d="M3.4 11.3 L9 16.8 L19.6 6" stroke="#f8d8d8" stroke-width="2.6" fill="none" stroke-linecap="round" stroke-linejoin="miter"/></svg>
<svg style="left:1985.5px;top:904.0px" width="23" height="23" viewBox="0 0 23 23"><rect x="0" y="0" width="23" height="23" rx="3" fill="#bd3a30"/><path d="M3.4 11.3 L9 16.8 L19.6 6" stroke="#f8d8d8" stroke-width="2.6" fill="none" stroke-linecap="round" stroke-linejoin="miter"/></svg>
<svg style="left:2146.9px;top:904.0px" width="23" height="23" viewBox="0 0 23 23"><rect x="0" y="0" width="23" height="23" rx="3" fill="#bd3a30"/><path d="M3.4 11.3 L9 16.8 L19.6 6" stroke="#f8d8d8" stroke-width="2.6" fill="none" stroke-linecap="round" stroke-linejoin="miter"/></svg>
<svg style="left:1583.2px;top:1029.0px" width="23" height="23" viewBox="0 0 23 23"><rect x="1.3" y="1.3" width="20.4" height="20.4" rx="2.5" fill="none" stroke="#727272" stroke-width="2.6"/></svg>
<svg style="left:1985.5px;top:1029.0px" width="23" height="23" viewBox="0 0 23 23"><rect x="1.3" y="1.3" width="20.4" height="20.4" rx="2.5" fill="none" stroke="#727272" stroke-width="2.6"/></svg>
<svg style="left:2146.9px;top:1029.0px" width="23" height="23" viewBox="0 0 23 23"><rect x="1.3" y="1.3" width="20.4" height="20.4" rx="2.5" fill="none" stroke="#727272" stroke-width="2.6"/></svg>
<svg style="left:1583.2px;top:1119.0px" width="23" height="23" viewBox="0 0 23 23"><rect x="0" y="0" width="23" height="23" rx="3" fill="#587b45"/><path d="M3.4 11.3 L9 16.8 L19.6 6" stroke="#b9dca0" stroke-width="2.6" fill="none" stroke-linecap="round" stroke-linejoin="miter"/></svg>
<svg style="left:1985.5px;top:1119.0px" width="23" height="23" viewBox="0 0 23 23"><rect x="0" y="0" width="23" height="23" rx="3" fill="#587b45"/><path d="M3.4 11.3 L9 16.8 L19.6 6" stroke="#b9dca0" stroke-width="2.6" fill="none" stroke-linecap="round" stroke-linejoin="miter"/></svg>
<svg style="left:2146.9px;top:1119.0px" width="23" height="23" viewBox="0 0 23 23"><rect x="1.3" y="1.3" width="20.4" height="20.4" rx="2.5" fill="none" stroke="#587a44" stroke-width="2.6"/></svg>
<svg style="left:1583.2px;top:1198.0px" width="23" height="23" viewBox="0 0 23 23"><rect x="0" y="0" width="23" height="23" rx="3" fill="#587b45"/><path d="M3.4 11.3 L9 16.8 L19.6 6" stroke="#b9dca0" stroke-width="2.6" fill="none" stroke-linecap="round" stroke-linejoin="miter"/></svg>
<svg style="left:1985.5px;top:1198.0px" width="23" height="23" viewBox="0 0 23 23"><rect x="0" y="0" width="23" height="23" rx="3" fill="#587b45"/><path d="M3.4 11.3 L9 16.8 L19.6 6" stroke="#b9dca0" stroke-width="2.6" fill="none" stroke-linecap="round" stroke-linejoin="miter"/></svg>
<svg style="left:2146.9px;top:1198.0px" width="23" height="23" viewBox="0 0 23 23"><rect x="1.3" y="1.3" width="20.4" height="20.4" rx="2.5" fill="none" stroke="#587a44" stroke-width="2.6"/></svg>
<div style="left:1583.2px;top:1275px;width:23px;height:3px;background:#587b45;border-radius:3px 3px 0 0"></div>
<div style="left:1985.5px;top:1275px;width:23px;height:3px;background:#587b45;border-radius:3px 3px 0 0"></div>
<div style="left:2146.9px;top:1275px;width:23px;height:3px;background:#587b45;border-radius:3px 3px 0 0"></div>
<div style="left:1688px;top:248px;width:387px;height:1037px;border:7px solid #e4402a"></div>
</body></html>
